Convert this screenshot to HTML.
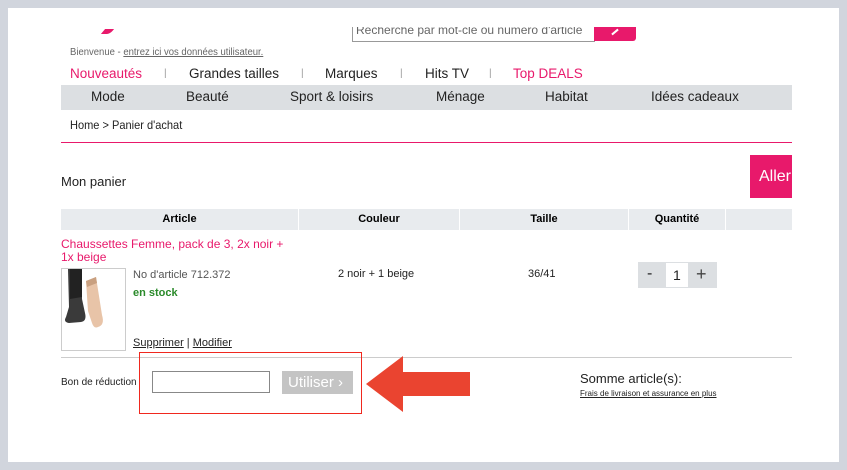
<!DOCTYPE html>
<html><head><meta charset="utf-8"><style>
*{margin:0;padding:0;box-sizing:border-box}
body{width:847px;height:470px;background:#d1d5dd;font-family:"Liberation Sans",sans-serif;position:relative;overflow:hidden}
#w{position:absolute;left:8px;top:8px;width:831px;height:454px;background:#fff}
.a{position:absolute;white-space:nowrap}
.n{font-size:13.5px;color:#222;top:89px}
.th{top:209px;height:21px;background:#e8ebee;font-size:11px;font-weight:bold;text-align:center;line-height:21px}
</style></head><body><div id="w"></div>
<div class="a" style="left:352px;top:8px;width:243px;height:34px;border:1px solid #999;border-top:none;overflow:hidden"><div class="a" style="left:3px;top:15px;font-size:12px;color:#666">Recherche par mot-clé ou numéro d'article</div></div>
<div class="a" style="left:594px;top:8px;width:42px;height:33px;background:#e8196b;border-radius:0 0 3px 0"></div>
<div class="a" style="left:611px;top:31px;width:8px;height:2px;background:#fff;transform:rotate(-40deg)"></div>
<div class="a" style="left:103px;top:29px;width:9px;height:5px;background:#e8196b;transform:skewX(-40deg);border-radius:0 0 3px 0"></div>
<div class="a" style="left:8px;top:8px;width:831px;height:19px;background:#fff"></div>
<div class="a" style="left:70px;top:47px;font-size:10px;color:#666;transform:scaleX(.95);transform-origin:left">Bienvenue - <u>entrez ici vos données utilisateur.</u></div>
<div class="a n" style="left:70px;top:66px;color:#e8196b">Nouveautés</div>
<div class="a" style="left:164px;top:68px;font-size:10px;color:#999">|</div>
<div class="a n" style="left:189px;top:66px">Grandes tailles</div>
<div class="a" style="left:301px;top:68px;font-size:10px;color:#999">|</div>
<div class="a n" style="left:325px;top:66px">Marques</div>
<div class="a" style="left:400px;top:68px;font-size:10px;color:#999">|</div>
<div class="a n" style="left:425px;top:66px">Hits TV</div>
<div class="a" style="left:489px;top:68px;font-size:10px;color:#999">|</div>
<div class="a n" style="left:513px;top:66px;color:#e8196b">Top DEALS</div>
<div class="a" style="left:61px;top:85px;width:731px;height:25px;background:#dcdfe2"></div>
<div class="a n" style="left:91px">Mode</div>
<div class="a n" style="left:186px">Beauté</div>
<div class="a n" style="left:290px">Sport &amp; loisirs</div>
<div class="a n" style="left:436px">Ménage</div>
<div class="a n" style="left:545px">Habitat</div>
<div class="a n" style="left:651px">Idées cadeaux</div>
<div class="a" style="left:70px;top:118px;font-size:12px;color:#222;transform:scaleX(.92);transform-origin:left">Home &gt; Panier d'achat</div>
<div class="a" style="left:61px;top:142px;width:731px;height:2px;border-top:1px solid #e8196b"></div>
<div class="a" style="left:750px;top:155px;width:42px;height:43px;background:#e8196b;color:#fff;font-size:16px;line-height:43px;padding-left:9px;overflow:hidden">Aller</div>
<div class="a" style="left:61px;top:174px;font-size:13px;color:#222">Mon panier</div>
<div class="a th" style="left:61px;width:237px">Article</div>
<div class="a th" style="left:299px;width:160px">Couleur</div>
<div class="a th" style="left:460px;width:168px">Taille</div>
<div class="a th" style="left:629px;width:96px">Quantité</div>
<div class="a th" style="left:726px;width:66px"></div>
<div class="a" style="left:61px;top:238px;font-size:12px;line-height:13px;color:#e8196b">Chaussettes Femme, pack de 3, 2x noir +<br>1x beige</div>
<div class="a" style="left:61px;top:268px;width:65px;height:83px;border:1px solid #ccc;background:#fff">
<svg width="63" height="81"><path d="M6 0h14v30l3 14q2 8-4 9l-12 1q-6-1-3-6l3-10z" fill="#3a3a3a"/><path d="M8 0h12v28l-12 2z" fill="#222"/><path d="M24 12l10-4 6 38q3 10-4 12q-4 2-6-4l-4-12z" fill="#e8c4a8"/><path d="M24 12l10-4 1 6l-10 4z" fill="#c9a080"/></svg></div>
<div class="a" style="left:133px;top:269px;font-size:11px;color:#555">No d'article 712.372</div>
<div class="a" style="left:133px;top:287px;font-size:11px;color:#2a8a2a;font-weight:bold">en stock</div>
<div class="a" style="left:338px;top:268px;font-size:11px;color:#222">2 noir + 1 beige</div>
<div class="a" style="left:528px;top:268px;font-size:11px;color:#222">36/41</div>
<div class="a" style="left:638px;top:262px;width:79px;height:26px;background:#dcdfe2"></div>
<div class="a" style="left:666px;top:263px;width:22px;height:24px;background:#fff"></div>
<div class="a" style="left:647px;top:265px;font-size:16px;color:#222">-</div>
<div class="a" style="left:673px;top:267px;font-size:14px;color:#222">1</div>
<div class="a" style="left:696px;top:264px;font-size:18px;color:#444">+</div>
<div class="a" style="left:133px;top:337px;font-size:11px;color:#222"><u>Supprimer</u> | <u>Modifier</u></div>
<div class="a" style="left:61px;top:357px;width:731px;height:1px;background:#ccc"></div>
<div class="a" style="left:61px;top:377px;font-size:10px;color:#222">Bon de réduction</div>
<div class="a" style="left:139px;top:352px;width:223px;height:62px;border:1.5px solid #f0281e"></div>
<div class="a" style="left:152px;top:371px;width:118px;height:22px;border:1px solid #888"></div>
<div class="a" style="left:282px;top:371px;width:71px;height:23px;background:#c4c4c4;color:#fff;font-size:15px;line-height:23px;padding-left:6px">Utiliser ›</div>
<svg class="a" style="left:366px;top:356px" width="106" height="56"><path d="M0 28L37 0V16H104V40H37V56Z" fill="#ea4430"/></svg>
<div class="a" style="left:580px;top:371px;font-size:13px;color:#222">Somme article(s):</div>
<div class="a" style="left:580px;top:389px;font-size:8px;color:#222"><u>Frais de livraison et assurance en plus</u></div>
</body></html>
